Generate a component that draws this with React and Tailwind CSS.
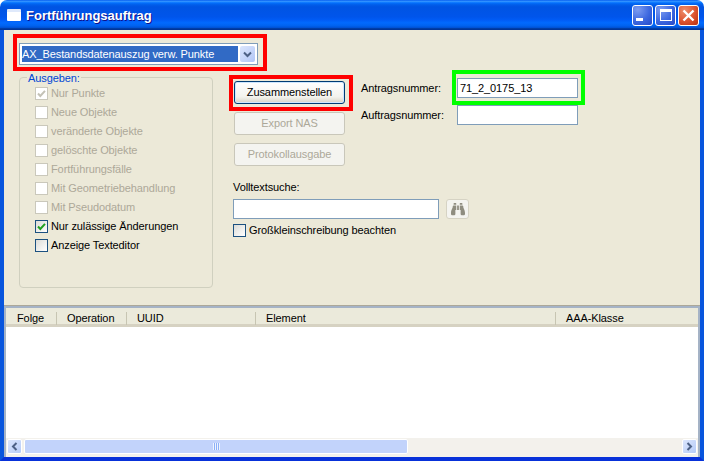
import { FaBinoculars } from "react-icons/fa";

const outputs = [
  { label: "Nur Punkte", checked: true, disabled: true },
  { label: "Neue Objekte", disabled: true },
  { label: "veränderte Objekte", disabled: true },
  { label: "gelöschte Objekte", disabled: true },
  { label: "Fortführungsfälle", disabled: true },
  { label: "Mit Geometriebehandlung", disabled: true },
  { label: "Mit Pseudodatum", disabled: true },
  { label: "Nur zulässige Änderungen", checked: true },
  { label: "Anzeige Texteditor" },
];

const columns = [
  { label: "Folge", width: "w-[50px]" },
  { label: "Operation", width: "w-[70px]" },
  { label: "UUID", width: "w-[129px]" },
  { label: "Element", width: "w-[300px]" },
  { label: "AAA-Klasse", width: "flex-1" },
];

const Check = ({ color }) => (
  <svg width="9" height="9" viewBox="0 0 9 9">
    <path d="M1 4.5 L3.3 7 L8 1.8" fill="none" stroke={color} strokeWidth="2" />
  </svg>
);

const CheckRow = ({ label, checked, disabled }) => (
  <div className="flex h-[19px] items-center">
    <div
      className={
        disabled
          ? "flex h-[13px] w-[13px] items-center justify-center border border-[#cac8bb] bg-white"
          : "flex h-[13px] w-[13px] items-center justify-center border border-[#1c5180] bg-[linear-gradient(135deg,#dcdcd7,#ffffff)]"
      }
    >
      {checked && <Check color={disabled ? "#c4c2b6" : "#21a121"} />}
    </div>
    <span className={disabled ? "ml-[3px] text-[#aca899]" : "ml-[3px] text-black"}>{label}</span>
  </div>
);

const XpButton = ({ children, disabled }) => (
  <button
    className={
      disabled
        ? "flex h-[23px] w-[111px] items-center justify-center rounded-[3px] border border-[#c9c7ba] bg-[#f4f4f0] text-[#aca899]"
        : "flex h-[23px] w-[111px] items-center justify-center rounded-[3px] border border-[#003c74] bg-[linear-gradient(180deg,#ffffff,#f3f3ee_70%,#d8d4c6)] text-black shadow-[inset_0_0_0_1px_#cee7ff]"
    }
  >
    {children}
  </button>
);

const WinButton = ({ children, red }) => (
  <div
    className={
      red
        ? "flex h-[21px] w-[21px] items-center justify-center rounded-[3px] border border-white bg-[radial-gradient(circle_at_30%_25%,#ee8e6c,#dc5430_55%,#b8300f)]"
        : "flex h-[21px] w-[21px] items-center justify-center rounded-[3px] border border-white bg-[radial-gradient(circle_at_25%_20%,#7d9cf0,#3d68e0_55%,#2349c8)]"
    }
  >
    {children}
  </div>
);

const ScrollArrow = ({ d }) => (
  <div className="flex h-[15px] w-[15px] items-center justify-center rounded-[2px] border border-white bg-[linear-gradient(135deg,#dbe6fd,#b6cbf7)]">
    <svg width="9" height="9" viewBox="0 0 9 9">
      <path d={d} fill="none" stroke="#4d6185" strokeWidth="2" />
    </svg>
  </div>
);

export default function App() {
  return (
    <div className="relative flex h-[461px] w-[704px] flex-col overflow-hidden rounded-t-[7px] bg-white font-['Liberation_Sans',sans-serif] text-[11px] leading-none tracking-[-0.1px]">
      <div className="flex h-[30px] shrink-0 items-center bg-[linear-gradient(180deg,#0058ee,#3593ff_4%,#288eff_6%,#127dff_8%,#036ffc_10%,#0262ee_14%,#0057e5_20%,#0054e3_24%,#0055eb_56%,#005bf5_66%,#026afe_76%,#0062ef_86%,#0052d6_92%,#0040ab_94%,#003092)] pl-[7px] pr-[5px]">
        <div className="h-[12px] w-[14px] rounded-[1px] border-t-[3px] border-[#dfe9fb] bg-white" />
        <span className="ml-[5px] flex-1 text-[13px] font-bold tracking-normal text-white [text-shadow:1px_1px_#0f1089]">
          Fortführungsauftrag
        </span>
        <div className="flex gap-[2px]">
          <WinButton>
            <div className="mt-[9px] mr-[6px] h-[3px] w-[7px] bg-white" />
          </WinButton>
          <WinButton>
            <div className="h-[12px] w-[12px] border border-t-[3px] border-white" />
          </WinButton>
          <WinButton red>
            <svg width="13" height="13" viewBox="0 0 13 13">
              <path d="M1.5 1.5 L11.5 11.5 M11.5 1.5 L1.5 11.5" stroke="#fff" strokeWidth="2.4" />
            </svg>
          </WinButton>
        </div>
      </div>

      <div className="flex min-h-0 flex-1 flex-col border-x-4 border-b-4 border-x-[#0855dd] border-b-[#0831d9] bg-[#ece9d8]">
        <div className="flex h-[276px] shrink-0 border-b border-[#aca899] px-[15px] pt-[13px]">
          <div className="flex w-[214px] flex-col">
            <div className="flex h-[22px] w-[239px] items-center border border-[#7f9db9] bg-white p-[2px]">
              <div className="flex h-full flex-1 items-center bg-[#316ac5] text-white">
                AX_Bestandsdatenauszug verw. Punkte
              </div>
              <div className="ml-[2px] flex h-[16px] w-[15px] items-center justify-center rounded-[2px] bg-[linear-gradient(135deg,#dbe6fd,#b2c6f6)]">
                <svg width="9" height="7" viewBox="0 0 9 7">
                  <path d="M1 1.5 L4.5 5 L8 1.5" fill="none" stroke="#4d6185" strokeWidth="2" />
                </svg>
              </div>
            </div>
            <div className="relative mt-[12px] h-[211px] w-[194px] rounded-[4px] border border-[#d0d0bf] pl-[15px] pt-[6px]">
              <span className="absolute -top-[5px] left-[7px] bg-[#ece9d8] px-[1px] text-[#0046d5]">Ausgeben:</span>
              {outputs.map((item) => (
                <CheckRow key={item.label} {...item} />
              ))}
            </div>
          </div>

          <div className="flex flex-col pt-[35px]">
            <div className="flex">
              <div className="flex w-[128px] flex-col pl-[1px] pt-[3px]">
                <XpButton>Zusammenstellen</XpButton>
                <div className="mt-[8px]">
                  <XpButton disabled>Export NAS</XpButton>
                </div>
                <div className="mt-[8px]">
                  <XpButton disabled>Protokollausgabe</XpButton>
                </div>
              </div>
              <div className="flex flex-col">
                <div className="flex h-[20px] items-center">
                  <span className="w-[96px] text-black">Antragsnummer:</span>
                  <div className="flex h-[20px] w-[121px] items-center border border-[#7f9db9] bg-white pl-[2px] text-black">
                    71_2_0175_13
                  </div>
                </div>
                <div className="mt-[7px] flex h-[20px] items-center">
                  <span className="w-[96px] text-black">Auftragsnummer:</span>
                  <div className="h-[20px] w-[121px] border border-[#7f9db9] bg-white" />
                </div>
              </div>
            </div>
            <span className="mt-[16px] text-black">Volltextsuche:</span>
            <div className="mt-[6px] flex">
              <div className="h-[20px] w-[206px] border border-[#7f9db9] bg-white" />
              <div className="ml-[7px] flex h-[20px] w-[23px] items-center justify-center rounded-[3px] border border-[#d6d3c4] bg-[#f4f4f0]">
                <FaBinoculars className="text-[14px] text-[#8f8d80]" />
              </div>
            </div>
            <div className="mt-[2px]">
              <CheckRow label="Großkleinschreibung beachten" />
            </div>
          </div>
        </div>

        <div className="flex min-h-0 flex-1 flex-col border-x-2 border-t-2 border-[#a5b3c6] bg-white">
          <div className="flex h-[19px] shrink-0 items-center border-b-[3px] border-[#d6d2c2] bg-[#ebeadb] pt-[4px] text-black">
            {columns.map((col, i) => (
              <div key={col.label} className={`${col.width} flex h-[13px] items-center pl-[11px]`}>
                {i > 0 && <div className="-ml-[11px] mr-[10px] h-[13px] w-[1px] bg-[#c7c5b2]" />}
                {col.label}
              </div>
            ))}
          </div>
          <div className="flex-1" />
          <div className="flex h-[19px] shrink-0 items-start bg-[#f3f1ec] px-[1px] pt-[1px]">
            <ScrollArrow d="M6.5 1 L3 4.5 L6.5 8" />
            <div className="ml-[2px] flex h-[15px] w-[384px] items-center justify-center rounded-[2px] border border-white bg-[#c2d3fb]">
              <div className="h-[7px] w-[7px] bg-[repeating-linear-gradient(90deg,#eef4fe_0,#eef4fe_1px,#8cb0f8_1px,#8cb0f8_2px)]" />
            </div>
            <div className="flex-1" />
            <ScrollArrow d="M2.5 1 L6 4.5 L2.5 8" />
          </div>
        </div>
      </div>

      <div className="absolute left-[13px] top-[34px] h-[37px] w-[254px] border-4 border-[#ff0000]" />
      <div className="absolute left-[229px] top-[75px] h-[36px] w-[124px] border-4 border-[#ff0000]" />
      <div className="absolute left-[452px] top-[70px] h-[35px] w-[133px] border-4 border-[#00ff00]" />
    </div>
  );
}
